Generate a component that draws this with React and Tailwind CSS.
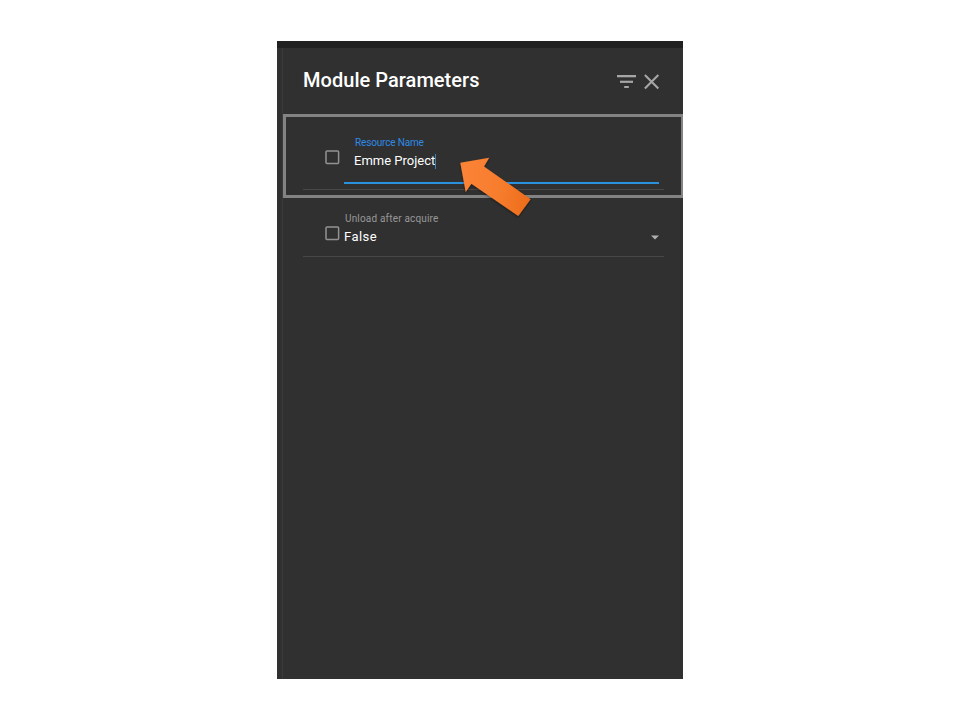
function Checkbox() {
  return (
    <svg width="15" height="15" viewBox="0 0 15 15" fill="none" className="shrink-0">
      <rect x="1" y="1" width="12.6" height="12.6" rx="1" stroke="#929292" strokeWidth="1.5" />
    </svg>
  );
}

function Header() {
  return (
    <header className="flex h-[66px] shrink-0 items-start justify-between pt-[20px] pr-[23px] pl-[20px]">
      <h1 className="text-[20px] leading-[24px] font-medium tracking-[0.04px] whitespace-nowrap text-white">
        Module Parameters
      </h1>
      <div className="flex pt-[5px] text-[#a6a6a6]">
        <svg width="19" height="17" viewBox="0 0 19 17" fill="currentColor" className="mr-[8px]">
          <rect x="0" y="2" width="19" height="2.3" />
          <rect x="3" y="7.7" width="13" height="2.2" />
          <rect x="7.2" y="13" width="4.6" height="2" />
        </svg>
        <svg width="16" height="17" viewBox="0 0 16 17" fill="none" stroke="currentColor" strokeWidth="2.1">
          <path d="M0.9 2 14.3 15.4M14.3 2 0.9 15.4" />
        </svg>
      </div>
    </header>
  );
}

function Arrow() {
  return (
    <svg
      className="pointer-events-none absolute top-[33px] left-[167px]"
      width="88"
      height="74"
      viewBox="453 150 88 74"
    >
      <defs>
        <linearGradient id="arrowFill" x1="461" y1="190" x2="530" y2="200" gradientUnits="userSpaceOnUse">
          <stop offset="0" stopColor="#fb8336" />
          <stop offset="0.55" stopColor="#f77d2d" />
          <stop offset="1" stopColor="#ec6c1a" />
        </linearGradient>
        <filter id="arrowShadow" x="-20%" y="-20%" width="140%" height="140%">
          <feDropShadow dx="0" dy="1.3" stdDeviation="1.2" floodColor="#000" floodOpacity="0.45" />
        </filter>
      </defs>
      <path
        d="M460.3 162.7 489.2 157.7 484 166.4 530.6 199.3 518.3 216 471.4 183.7 465.7 192Z"
        fill="url(#arrowFill)"
        filter="url(#arrowShadow)"
      />
    </svg>
  );
}

function ResourceName() {
  return (
    <section className="relative h-[84px] shrink-0 border-[3px] border-r-2 border-[#838383] pr-[17px] pl-[17px]">
      <div className="flex h-[73px] border-b border-[#474747] pl-[22px]">
        <div className="pt-[33px]">
          <Checkbox />
        </div>
        <div className="ml-[4px] flex h-[67px] w-[315px] flex-col border-b-2 border-[#2c91dc] pt-[20px] pl-[10px]">
          <label className="pl-[1px] text-[10px] leading-[12px] tracking-[-0.16px] whitespace-nowrap text-[#2e8ae6]">
            Resource Name
          </label>
          <div className="mt-[4px] flex h-[16px] items-center">
            <span className="text-[13px] leading-[16px] whitespace-nowrap text-white">Emme Project</span>
            <span className="h-[15px] w-px bg-[#2f86c8]" />
          </div>
        </div>
      </div>
      <Arrow />
    </section>
  );
}

function UnloadAfterAcquire() {
  return (
    <section className="pr-[19px] pl-[20px]">
      <div className="flex h-[59px] border-b border-[#474747] pl-[22px]">
        <div className="pt-[28px]">
          <Checkbox />
        </div>
        <div className="ml-[4px] flex flex-1 flex-col pt-[15px]">
          <span className="pl-[1px] text-[10px] leading-[12px] tracking-[0.18px] whitespace-nowrap text-[#989898]">
            Unload after acquire
          </span>
          <div className="mt-[4px] flex items-center justify-between pr-[5px]">
            <span className="text-[13px] leading-[16px] tracking-[0.45px] text-white">False</span>
            <svg width="8" height="5" viewBox="0 0 8 5">
              <path d="M0 0.5H8L4 4.5Z" fill="#b0b0b0" />
            </svg>
          </div>
        </div>
      </div>
    </section>
  );
}

export default function App() {
  return (
    <div className="flex h-[720px] w-[960px] justify-center bg-white pt-[41px] font-['Roboto','Liberation_Sans',sans-serif]">
      <main className="flex h-[638px] w-[406px] flex-col border-t-[7px] border-[#212121] bg-[#303030]">
        <div className="flex flex-1">
          <div className="w-[6px] border-r border-[#3b3b3b]" />
          <div className="flex w-[400px] flex-col">
            <Header />
            <ResourceName />
            <UnloadAfterAcquire />
          </div>
        </div>
      </main>
    </div>
  );
}
